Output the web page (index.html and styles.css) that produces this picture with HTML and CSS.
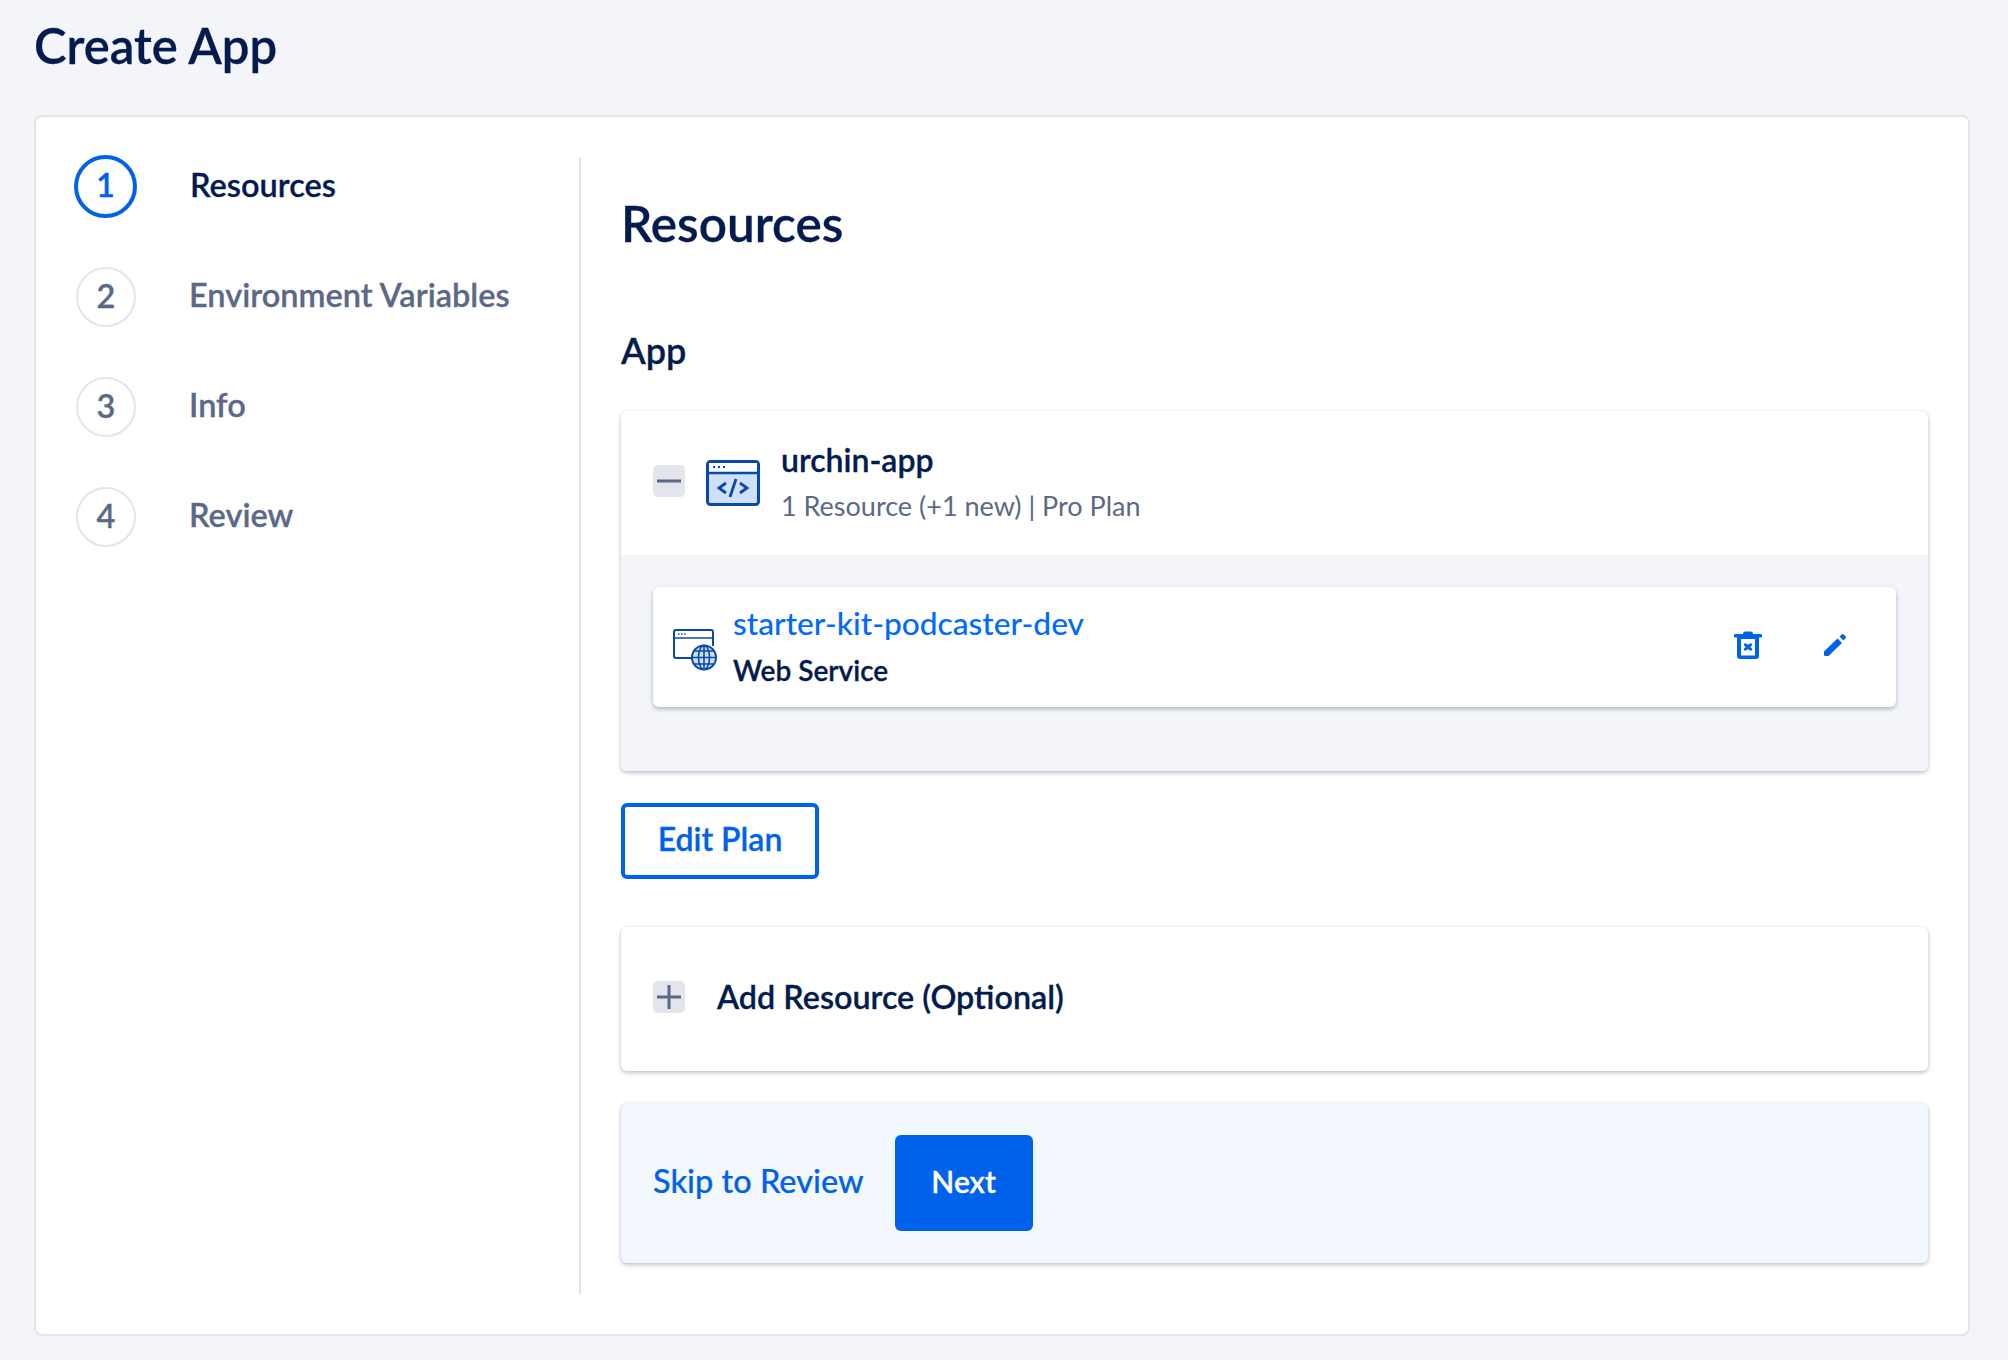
FILE: index.html

```html
<!DOCTYPE html>
<html lang="en">

<head>
    <meta charset="UTF-8" />
    <meta name="viewport" content="width=device-width, initial-scale=1.0" />
    <title>Create App</title>

    <link rel="stylesheet" href="styles.css">
</head>

<body>
    <h1 class="page-title">Create App</h1>

    <main class="wizard">
        <ol class="steps">
            <li class="step step-active"><span class="step-num">1</span><span class="step-label">Resources</span></li>
            <li class="step"><span class="step-num">2</span><span class="step-label">Environment Variables</span></li>
            <li class="step"><span class="step-num">3</span><span class="step-label">Info</span></li>
            <li class="step"><span class="step-num">4</span><span class="step-label">Review</span></li>
        </ol>

        <section class="content">
            <h2 class="content-title">Resources</h2>
            <h3 class="section-title">App</h3>

            <div class="panel">
                <div class="app-head">
                    <span class="toggle">
                        <svg width="32" height="32" viewBox="0 0 32 32"><path d="M4 16h24" stroke="#5b6987" stroke-width="3" /></svg>
                    </span>
                    <svg class="app-icon" width="54" height="46" viewBox="0 0 54 46">
                        <rect x="1.5" y="1.5" width="51" height="43" rx="3" fill="#cfe0fa" stroke="#0a4aa6" stroke-width="3" />
                        <path d="M3 3h48v9H3z" fill="#fff" />
                        <path d="M2 13h50" stroke="#0a4aa6" stroke-width="2.5" />
                        <path d="M7 7h2M12 7h2M17 7h2" stroke="#0a4aa6" stroke-width="2" />
                        <path d="M20 23l-7 5 7 5M34 23l7 5-7 5M30 19l-6 18" fill="none" stroke="#0a4aa6" stroke-width="2.8" />
                    </svg>
                    <div class="app-text">
                        <div class="app-name">urchin-app</div>
                        <div class="app-meta">1 Resource (+1 new) | Pro Plan</div>
                    </div>
                </div>

                <div class="app-body">
                    <div class="resource">
                        <svg class="resource-icon" width="44" height="42" viewBox="0 0 44 42">
                            <path d="M27 29H3a2 2 0 0 1-2-2V3a2 2 0 0 1 2-2h35a2 2 0 0 1 2 2v14" fill="#fff" stroke="#0a4aa6" stroke-width="2" />
                            <path d="M1 9h39" stroke="#0a4aa6" stroke-width="1.5" />
                            <path d="M5 5h1.5M8 5h1.5M11 5h1.5" stroke="#0a4aa6" stroke-width="1.5" />
                            <circle cx="31" cy="28.500" r="12" fill="#cfe0fa" stroke="#0a4aa6" stroke-width="2" />
                            <ellipse cx="31" cy="28.500" rx="5.500" ry="12" fill="none" stroke="#0a4aa6" stroke-width="1.6" />
                            <path d="M31 16.500v24M19 28.500h24M21 22h20M21 35h20" fill="none" stroke="#0a4aa6" stroke-width="1.6" />
                        </svg>
                        <div class="resource-text">
                            <a class="resource-name" href="#">starter-kit-podcaster-dev</a>
                            <div class="resource-type">Web Service</div>
                        </div>
                        <div class="resource-actions">
                            <svg width="28" height="28" viewBox="0 0 28 28" fill="#0061eb">
                                <path d="M9 3a2.500 2.500 0 0 1 2.500-2.500h5A2.500 2.500 0 0 1 19 3h7.500a1.500 1.500 0 0 1 0 3.500H1.500A1.500 1.500 0 0 1 1.500 3z" />
                                <path d="M3 6h22v19a3 3 0 0 1-3 3H6a3 3 0 0 1-3-3zm4 2v16.500h14V8z" fill-rule="evenodd" />
                                <path d="M11 12l3 1.800 3-1.800 1.500 2-2.200 2 2.200 2-1.500 2-3-1.800-3 1.800-1.500-2 2.200-2-2.200-2z" />
                            </svg>
                            <svg width="22" height="22" viewBox="0 0 22 22" fill="#0061eb">
                                <path d="M0 17.500L13.500 4.500l4.500 4.500L4.500 22H1.500A1.500 1.500 0 0 1 0 20.500z" />
                                <path d="M15.500 2.500L18 0.300a1 1 0 0 1 1.400 0l2.300 2.300a1 1 0 0 1 0 1.400L19.500 6.500z" />
                            </svg>
                        </div>
                    </div>
                </div>
            </div>

            <button class="btn-outline" type="button">Edit Plan</button>

            <div class="panel add-panel">
                <span class="toggle">
                    <svg width="32" height="32" viewBox="0 0 32 32"><path d="M4 16h24M16 4v24" stroke="#5b6987" stroke-width="3" /></svg>
                </span>
                <span class="add-label">Add Resource (Optional)</span>
            </div>

            <div class="panel actions">
                <a class="skip-link" href="#">Skip to Review</a>
                <button class="btn-primary" type="button">Next</button>
            </div>
        </section>
    </main>
</body>

</html>
```

FILE: styles.css

```css
* {
    box-sizing: border-box;
}

body {
    margin: 0;
    height: 1360px;
    padding: 0 38px 0 34px;
    background: #f3f5f9;
    color: #031b4e;
    font-family: "Lato", "Open Sans", sans-serif;
    overflow: hidden;
}

/* Lato has no semibold here, so thicken the medium a little */
.page-title,
.step,
.content-title,
.section-title,
.app-name,
.resource-type,
.btn-outline,
.add-label,
.btn-primary {
    font-weight: 600;
    -webkit-text-stroke: 0.3px currentColor;
}

.page-title {
    margin: 0;
    height: 115px;
    padding-top: 17px;
    font-size: 49px;
    line-height: 56px;
}

.wizard {
    display: flex;
    height: 1221px;
    padding: 40px 40px 40px 0;
    background: #fff;
    border: 2px solid #e4e5e9;
    border-radius: 8px;
}

.steps {
    list-style: none;
    margin: 0;
    padding: 0 0 0 40px;
    width: 545px;
    border-right: 2px solid #e4e5e9;
}

.step {
    display: flex;
    align-items: center;
    height: 60px;
    margin-bottom: 50px;
    color: #5b6987;
    font-size: 32.5px;
}

.step-label {
    padding-bottom: 5px;
}

.step-num {
    width: 60px;
    height: 60px;
    margin-right: 53px;
    padding-bottom: 4px;
    display: flex;
    align-items: center;
    justify-content: center;
    flex-shrink: 0;
    border: 2px solid #e4e5e9;
    border-radius: 50%;
}

.step-active {
    color: #031b4e;
}

.step-active .step-num {
    width: 63px;
    height: 63px;
    margin: -1px 53px 0 -2px;
    border: 4px solid #0061eb;
    color: #0061eb;
}

.content {
    flex: 1;
    padding-left: 40px;
}

.content-title {
    margin: 0;
    padding-top: 38px;
    font-size: 49.500px;
    line-height: 56px;
}

.section-title {
    margin: 78px 0 0;
    font-size: 36px;
    line-height: 42px;
}

.panel {
    background: #fff;
    border-radius: 6px;
    box-shadow: 0 0 2px rgba(3, 27, 78, 0.1), 0 2px 4px rgba(3, 27, 78, 0.25);
}

.panel:first-of-type {
    margin-top: 40px;
}

.app-head {
    display: flex;
    align-items: center;
    height: 144px;
    padding-left: 32px;
}

.toggle {
    width: 32px;
    height: 32px;
    margin-top: -4px;
    flex-shrink: 0;
    display: block;
    background: #e4e5ec;
    border-radius: 5px;
}

.toggle svg {
    display: block;
}

.app-icon {
    margin-left: 21px;
    flex-shrink: 0;
}

.app-text {
    margin-left: 21px;
}

.app-name {
    font-size: 32px;
    line-height: 40px;
}

.app-meta {
    margin-top: 6px;
    color: #5b6987;
    font-size: 27px;
    line-height: 40px;
}

.app-body {
    height: 216px;
    padding: 32px;
    background: #f3f5f9;
    border-radius: 0 0 6px 6px;
}

.resource {
    display: flex;
    align-items: center;
    height: 120px;
    padding: 0 50px 0 20px;
    background: #fff;
    border-radius: 6px;
    box-shadow: 0 2px 4px rgba(3, 27, 78, 0.3);
}

.resource-icon {
    flex-shrink: 0;
    margin-top: 6px;
}

.resource-text {
    margin-left: 16px;
    flex: 1;
    padding-bottom: 3px;
}

.resource-name {
    display: block;
    color: #0069ff;
    font-size: 31.700px;
    line-height: 40px;
    font-weight: 500;
    text-decoration: none;
}

.resource-type {
    margin-top: 8px;
    font-size: 28px;
    line-height: 38px;
}

.resource-actions {
    display: flex;
    align-items: center;
    gap: 62px;
    margin-bottom: 5px;
}

.btn-outline {
    display: block;
    width: 198px;
    height: 76px;
    margin-top: 32px;
    padding: 0 0 5px;
    background: #fff;
    border: 4px solid #0061eb;
    border-radius: 6px;
    color: #0061eb;
    font-family: inherit;
    font-size: 32px;
}

.add-panel {
    display: flex;
    align-items: center;
    height: 144px;
    margin-top: 48px;
    padding-left: 32px;
}

.add-label {
    margin-left: 32px;
    padding-bottom: 5px;
    font-size: 32.300px;
}

.actions {
    display: flex;
    align-items: center;
    height: 160px;
    margin-top: 32px;
    padding-left: 32px;
    background: #f3f7fe;
}

.skip-link {
    padding-bottom: 5px;
    color: #0061eb;
    font-size: 32.500px;
    font-weight: 500;
    -webkit-text-stroke: 0.2px currentColor;
    text-decoration: none;
}

.btn-primary {
    width: 138px;
    height: 96px;
    margin-left: 31px;
    padding-bottom: 6px;
    background: #0061eb;
    border: none;
    border-radius: 6px;
    color: #fff;
    font-family: inherit;
    font-size: 30px;
}
```
